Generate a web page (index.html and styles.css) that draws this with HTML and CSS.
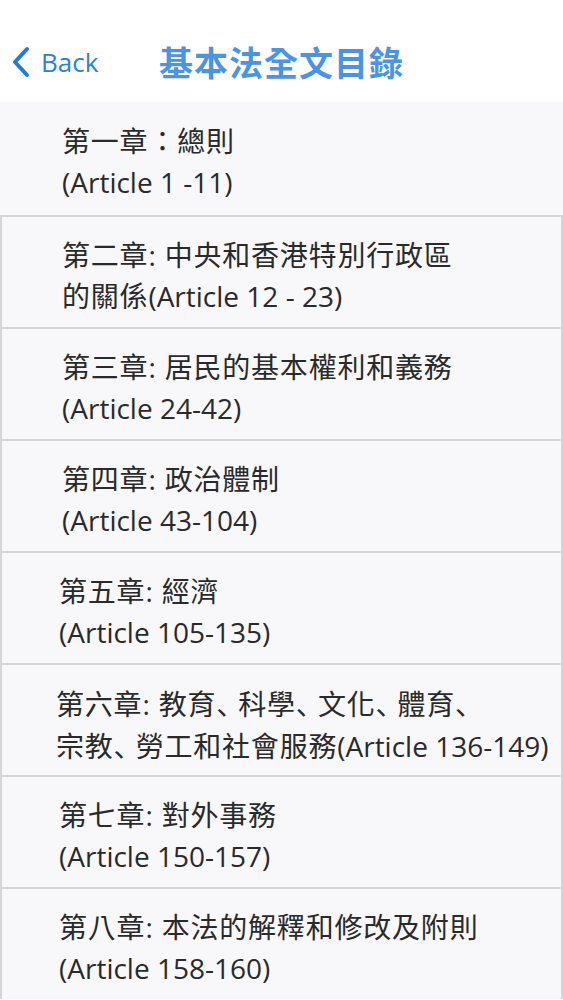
FILE: index.html
```html
<!DOCTYPE html>
<html lang="zh-Hant">
<head>
<meta charset="utf-8">
<title>基本法全文目錄</title>
<link rel="stylesheet" href="styles.css">
</head>
<body>
<header class="nav">
  <a class="back" href="#">
    <svg class="chev" width="20" height="32" viewBox="0 0 20 32"><path d="M16 3 L4 16 L16 29" fill="none" stroke="#1f7be0" stroke-width="4" stroke-linecap="round" stroke-linejoin="round"/></svg>
    <span>Back</span>
  </a>
  <h1 class="title">基本法全文目錄</h1>
</header>
<ul class="list">
  <li class="row first">第一章：總則<br><span class="lat">(Article 1 -11)</span></li>
  <li class="row">第二章: 中央和香港特別行政區<br>的關係<span class="lat">(Article 12 - 23)</span></li>
  <li class="row">第三章: 居民的基本權利和義務<br><span class="lat">(Article 24-42)</span></li>
  <li class="row">第四章: 政治體制<br><span class="lat">(Article 43-104)</span></li>
  <li class="row shift">第五章: 經濟<br><span class="lat">(Article 105-135)</span></li>
  <li class="row shift2">第六章: 教育<span class="p" lang="zh-Hans">、</span>科學<span class="p" lang="zh-Hans">、</span>文化<span class="p" lang="zh-Hans">、</span>體育<span class="p" lang="zh-Hans">、</span><br>宗教<span class="p" lang="zh-Hans">、</span>勞工和社會服務<span class="lat">(Article 136-149)</span></li>
  <li class="row shift">第七章: 對外事務<br><span class="lat">(Article 150-157)</span></li>
  <li class="row shift">第八章: 本法的解釋和修改及附則<br><span class="lat">(Article 158-160)</span></li>
</ul>
</body>
</html>
```
FILE: styles.css
```css
html, body {
  margin: 0;
  padding: 0;
  background: #ffffff;
}
body {
  font-family: "Open Sans", "Noto Sans", "Noto Sans CJK TC", sans-serif;
  overflow: hidden;
}
.nav {
  position: relative;
  height: 102px;
  display: flex;
  align-items: center;
  justify-content: center;
  background: #ffffff;
}
.back {
  position: absolute;
  left: 11px;
  top: 46px;
  display: flex;
  align-items: center;
  gap: 10px;
  color: #2a82dc;
  text-decoration: none;
  font-family: "Open Sans", "Noto Sans", sans-serif;
  font-size: 26px;
  line-height: 32px;
}
.chev { display: block; }
.title {
  margin: 0;
  margin-top: 20px;
  font-family: "Noto Sans CJK TC", sans-serif;
  font-weight: 700;
  font-size: 34px;
  color: #4a94e3;
  letter-spacing: 1px;
}
.list {
  list-style: none;
  margin: 0;
  padding: 0;
  background: #f7f7f9;
}
.row {
  box-sizing: border-box;
  height: 112px;
  padding: 18px 0 0 60px;
  font-family: "Open Sans", "Noto Sans CJK TC", sans-serif;
  font-size: 28px;
  line-height: 41px;
  letter-spacing: 0.8px;
  color: #2a2a2a;
  background: #f8f7fa;
  border-top: 2px solid #d6d6d8;
  border-left: 2px solid #d6d6d8;
  border-right: 2px solid #d6d6d8;
  white-space: nowrap;
}
.lat { letter-spacing: 0; }
.p {
  font-family: "Noto Sans CJK SC", sans-serif;
  letter-spacing: -6px;
}
.row.first {
  height: 113px;
  border: none;
  padding-left: 62px;
  padding-top: 19px;
}
.row.shift { padding-left: 57px; }
.row.shift2 { padding-left: 54px; }
```
